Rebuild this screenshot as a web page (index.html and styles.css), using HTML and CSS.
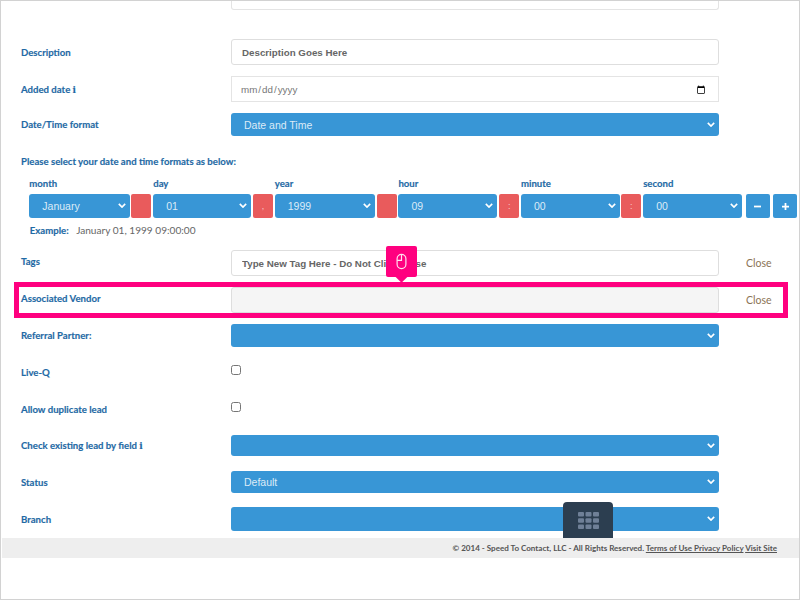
FILE: index.html
```html
<!DOCTYPE html>
<html lang="en">
<head>
<meta charset="utf-8">
<title>Lead settings</title>
<link rel="stylesheet" href="styles.css">
</head>
<body>
<div class="frame">
  <div class="stub"></div>
  <form class="form">
    <div class="row row-input">
      <label class="label">Description</label>
      <input class="field text-field" type="text" value="Description Goes Here">
    </div>
    <div class="row row-input">
      <label class="label">Added date <span class="info">i</span></label>
      <input class="field date-field" type="date">
    </div>
    <div class="row row-select">
      <label class="label">Date/Time format</label>
      <div class="field select"><span>Date and Time</span><svg class="chev" viewBox="0 0 10 6"><path d="M1 1l4 4 4-4"/></svg></div>
    </div>
    <p class="heading">Please select your date and time formats as below:</p>
    <div class="dt-grid">
      <span class="dt-label c1">month</span>
      <span class="dt-label c3">day</span>
      <span class="dt-label c5">year</span>
      <span class="dt-label c7">hour</span>
      <span class="dt-label c9">minute</span>
      <span class="dt-label c11">second</span>
      <div class="select dt-select"><span>January</span><svg class="chev" viewBox="0 0 10 6"><path d="M1 1l4 4 4-4"/></svg></div>
      <div class="sep"></div>
      <div class="select dt-select"><span>01</span><svg class="chev" viewBox="0 0 10 6"><path d="M1 1l4 4 4-4"/></svg></div>
      <div class="sep">,</div>
      <div class="select dt-select"><span>1999</span><svg class="chev" viewBox="0 0 10 6"><path d="M1 1l4 4 4-4"/></svg></div>
      <div class="sep"></div>
      <div class="select dt-select"><span>09</span><svg class="chev" viewBox="0 0 10 6"><path d="M1 1l4 4 4-4"/></svg></div>
      <div class="sep">:</div>
      <div class="select dt-select"><span>00</span><svg class="chev" viewBox="0 0 10 6"><path d="M1 1l4 4 4-4"/></svg></div>
      <div class="sep">:</div>
      <div class="select dt-select"><span>00</span><svg class="chev" viewBox="0 0 10 6"><path d="M1 1l4 4 4-4"/></svg></div>
      <div class="step step-minus"><svg viewBox="0 0 8 8"><path d="M0 4h8"/></svg></div>
      <div class="step step-plus"><svg viewBox="0 0 8 8"><path d="M0 4h8M4 0v8"/></svg></div>
    </div>
    <p class="example"><b>Example:</b><span>January 01, 1999 09:00:00</span></p>
    <div class="row row-input">
      <label class="label label-up">Tags</label>
      <input class="field text-field" type="text" value="Type New Tag Here - Do Not Click Close">
      <a class="close">Close</a>
    </div>
    <div class="row row-input">
      <label class="label label-up">Associated Vendor</label>
      <div class="field disabled"></div>
      <a class="close">Close</a>
    </div>
    <div class="row row-select">
      <label class="label">Referral Partner:</label>
      <div class="field select"><svg class="chev" viewBox="0 0 10 6"><path d="M1 1l4 4 4-4"/></svg></div>
    </div>
    <div class="row row-check">
      <label class="label label-down">Live-Q</label>
      <input class="check" type="checkbox">
    </div>
    <div class="row row-check row-check-2">
      <label class="label label-down">Allow duplicate lead</label>
      <input class="check" type="checkbox">
    </div>
    <div class="row row-short">
      <label class="label">Check existing lead by field <span class="info">i</span></label>
      <div class="field select"><svg class="chev" viewBox="0 0 10 6"><path d="M1 1l4 4 4-4"/></svg></div>
    </div>
    <div class="row row-status">
      <label class="label">Status</label>
      <div class="field select"><span>Default</span><svg class="chev" viewBox="0 0 10 6"><path d="M1 1l4 4 4-4"/></svg></div>
    </div>
    <div class="row row-branch">
      <label class="label">Branch</label>
      <div class="field select"><svg class="chev" viewBox="0 0 10 6"><path d="M1 1l4 4 4-4"/></svg></div>
    </div>
  </form>
  <footer class="footer">© 2014 - Speed To Contact, LLC - All Rights Reserved. <a>Terms of Use Privacy Policy</a> <a>Visit Site</a></footer>

  <div class="highlight"></div>
  <div class="pointer">
    <svg viewBox="0 0 12 18"><rect x="1.2" y="1.2" width="9.6" height="15.6" rx="4.8"/><path d="M6 1.2v6.6H1.2"/></svg>
  </div>
  <div class="launcher">
    <svg viewBox="0 0 21 17"><rect x="0" y="0" width="6" height="4.6" rx="1"/><rect x="7.5" y="0" width="6" height="4.6" rx="1"/><rect x="15" y="0" width="6" height="4.6" rx="1"/><rect x="0" y="6.2" width="6" height="4.6" rx="1"/><rect x="7.5" y="6.2" width="6" height="4.6" rx="1"/><rect x="15" y="6.2" width="6" height="4.6" rx="1"/><rect x="0" y="12.4" width="6" height="4.6" rx="1"/><rect x="7.5" y="12.4" width="6" height="4.6" rx="1"/><rect x="15" y="12.4" width="6" height="4.6" rx="1"/></svg>
  </div>
</div>
</body>
</html>
```
FILE: styles.css
```css
* { box-sizing: border-box; }
html, body { margin: 0; padding: 0; }
body { width: 800px; height: 600px; overflow: hidden; background: #fff; font-family: "Liberation Sans", Arial, sans-serif; }
.frame { position: relative; width: 800px; height: 600px; border: 1px solid #d2d2d2; overflow: hidden; }
.stub { width: 488px; height: 9px; margin-left: 230px; border: 1px solid #e4e4e4; border-top: 0; border-radius: 0 0 3px 3px; }
.form { display: flex; flex-direction: column; padding: 29px 0 0 20px; }
.row { display: flex; align-items: center; margin-bottom: 11px; }
.row-input { height: 26px; }
.row-select { height: 23px; }
.label { width: 210px; flex: none; padding-top: 1px; font: 700 9.6px/12px Lato, sans-serif; color: #1f6aa5; -webkit-text-stroke: 0.15px #1f6aa5; }
.label-up { align-self: flex-start; margin-top: 6px; padding-top: 0; }
.label-down { align-self: flex-start; margin-top: 1.5px; height: 12px; padding-top: 0; }
.info { font: 700 9px/12px "DejaVu Serif", serif; }
.field { width: 488px; flex: none; height: 100%; border-radius: 3px; }
.text-field { border: 1px solid #dedede; padding: 0 10px; font: 700 9.75px "Liberation Sans", sans-serif; color: #666; background: #fff; outline: 0; }
.date-field { border: 1px solid #e4e4e4; border-radius: 0; padding: 1px 10px 0 8px; font: 400 9.8px "Liberation Sans", sans-serif; color: #777; background: #fff; }
.disabled { background: #f5f5f5; border: 1px solid #dedede; }
.select { display: flex; align-items: center; background: #3896d6; color: #dcebf7; font-size: 10.5px; padding-left: 13px; position: relative; border-radius: 3px; }
.chev { position: absolute; right: 4px; top: 50%; width: 8px; height: 5px; margin-top: -3px; fill: none; stroke: #fff; stroke-width: 2; }
.heading { margin: 9px 0 0; height: 22px; font: 700 9.6px/12px Lato, sans-serif; color: #1f6aa5; -webkit-text-stroke: 0.15px #1f6aa5; }
.dt-grid { display: grid; grid-template-columns: 100.3px 20px 98px 20px 100px 20px 99px 20px 98.6px 20px 99.2px 25.8px 25.5px; grid-template-rows: 12px 24px; column-gap: 1.8px; row-gap: 4px; margin-left: 8.3px; width: 780px; }
.dt-label { font: 700 9.6px/12px Lato, sans-serif; color: #1f6aa5; -webkit-text-stroke: 0.15px #1f6aa5; grid-row: 1; }
.c1 { grid-column: 1; } .c3 { grid-column: 3; } .c5 { grid-column: 5; } .c7 { grid-column: 7; } .c9 { grid-column: 9; } .c11 { grid-column: 11; }
.dt-select { grid-row: 2; height: 24px; }
.sep { grid-row: 2; background: #e95b5c; border-radius: 2px; color: #f7c9c9; font-size: 9px; line-height: 24px; text-align: center; }
.step { grid-row: 2; background: #3896d6; border-radius: 2px; display: flex; align-items: center; justify-content: center; }
.step-minus { margin-left: 1.5px; }
.step-plus { margin-left: 1.2px; }
.step svg { width: 7px; height: 7px; fill: none; stroke: #fff; stroke-width: 2; }
.example { margin: 6px 0 0 8.8px; height: 26px; font: 400 10.1px/12px Lato, sans-serif; color: #666; display: flex; gap: 7.5px; align-items: flex-start; }
.example b { color: #1f6aa5; font-size: 9.6px; line-height: 13px; -webkit-text-stroke: 0.15px #1f6aa5; }
.close { margin-left: 27px; font: 400 10.5px Lato, sans-serif; color: #8b7355; }
.row-check { height: 10px; margin-bottom: 27px; margin-top: 7px; }
.row-check-2 { margin-top: 0; margin-bottom: 23px; }
.check { width: 9.5px; height: 9.5px; margin: 0; flex: none; }
.row-short { height: 21px; margin-bottom: 15px; }
.row-status { height: 22px; margin-bottom: 14px; }
.row-branch { height: 24px; margin-bottom: 7px; }
.footer { height: 20px; margin-left: 1px; background: #eee; text-align: right; padding-right: 22px; font: 700 8.05px/20px Lato, sans-serif; color: #555; }
.footer a { text-decoration: underline; }
.highlight { position: absolute; left: 12.5px; top: 281px; width: 774px; height: 36px; border: 5px solid #ff007f; }
.pointer { position: absolute; left: 384.5px; top: 245px; width: 31px; height: 31px; border-radius: 2px; background: #ff007f; display: flex; align-items: center; justify-content: center; }
.pointer::after { content: ""; position: absolute; left: 11px; bottom: -4px; width: 9px; height: 9px; background: #ff007f; transform: rotate(45deg); }
.pointer svg { width: 11px; height: 17px; fill: none; stroke: #ffe0ef; stroke-width: 1.3; position: relative; z-index: 1; }
.launcher { position: absolute; left: 562px; top: 501px; width: 50px; height: 36px; border-radius: 4px 4px 0 0; background: #2c3e50; display: flex; align-items: center; justify-content: center; }
.launcher svg { width: 21px; height: 17px; fill: #6f8097; }
```
